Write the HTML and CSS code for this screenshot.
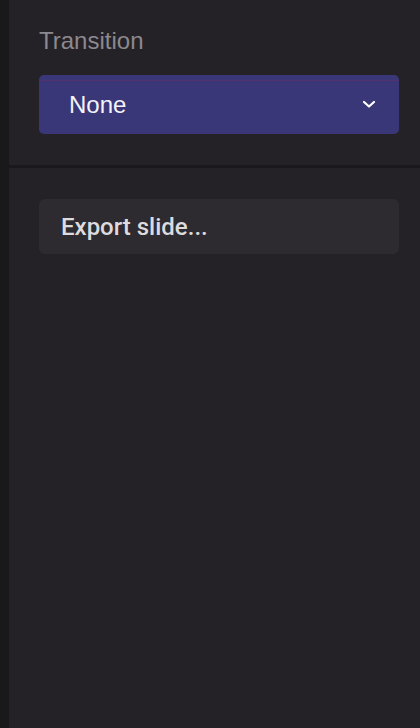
FILE: index.html
```html
<!DOCTYPE html>
<html lang="en">

<head>
    <meta charset="UTF-8">
    <meta name="viewport" content="width=device-width, initial-scale=1.0">
    <title>Slide settings</title>
    <link rel="stylesheet" href="styles.css">
</head>

<body>
    <div class="app">
        <div class="rail"></div>
        <div class="panel">
            <section class="group">
                <label class="label">Transition</label>
                <div class="select">
                    <span class="select-value">None</span>
                    <svg class="chevron" width="14" height="9" viewBox="0 0 14 9">
                        <path d="M2 2 L7 6.5 L12 2" fill="none" stroke="#ffffff" stroke-width="2.2" stroke-linecap="round" stroke-linejoin="round" />
                    </svg>
                </div>
            </section>
            <div class="divider"></div>
            <section class="group actions">
                <button class="export">Export slide...</button>
            </section>
        </div>
    </div>
</body>

</html>
```

FILE: styles.css
```css
html,
body {
    margin: 0;
    height: 100%;
    background-color: #252227;
}

.app {
    display: flex;
    height: 100%;
}

.rail {
    width: 9px;
    flex-shrink: 0;
    background-color: #19181b;
}

.panel {
    flex: 1;
    display: flex;
    flex-direction: column;
    background-color: #252227;
}

.group {
    display: flex;
    flex-direction: column;
    padding: 27px 21px 31px 30px;
}

.label {
    font-family: "Liberation Sans", Arial, sans-serif;
    font-size: 24px;
    line-height: 28px;
    color: #8c898f;
}

.select {
    margin-top: 20px;
    height: 59px;
    display: flex;
    align-items: center;
    justify-content: space-between;
    padding: 0 23px 0 30px;
    border-radius: 5px;
    background: linear-gradient(#3a3778 0, #3a3778 5px, #53306f 5px, #53306f 6px, #3a3778 6px);
}

.select-value {
    font-family: "Liberation Sans", Arial, sans-serif;
    font-size: 24px;
    color: #f4f3fa;
}

.chevron {
    display: block;
}

.divider {
    height: 3px;
    background-color: #1a181c;
}

.actions {
    padding-top: 31px;
}

.export {
    height: 55px;
    border: none;
    border-radius: 6px;
    background-color: #2d2b30;
    color: #dddbde;
    font-family: Roboto, sans-serif;
    font-weight: 500;
    font-size: 24px;
    text-align: left;
    padding: 0 22px;
}
```
